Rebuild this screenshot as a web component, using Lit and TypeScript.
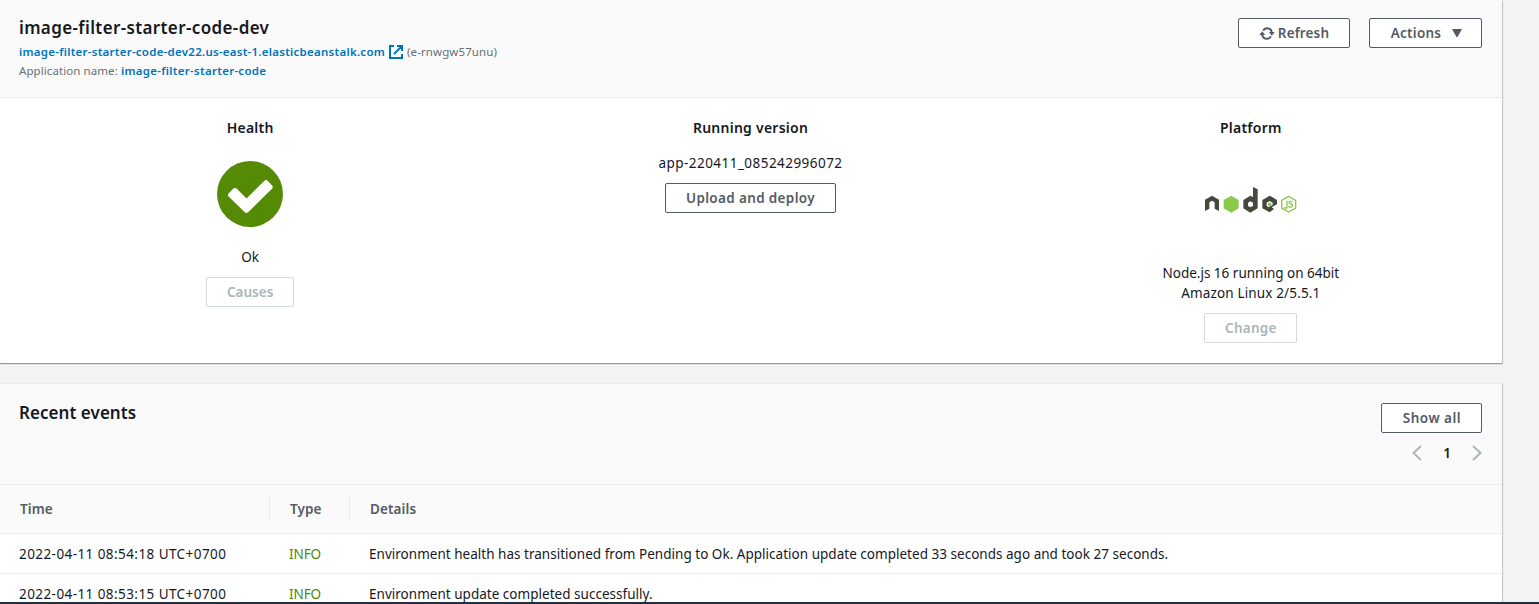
import { LitElement, html, css, svg } from "lit";
import { customElement } from "lit/decorators.js";

const EVENTS = [
  {
    time: "2022-04-11 08:54:18 UTC+0700",
    type: "INFO",
    details:
      "Environment health has transitioned from Pending to Ok. Application update completed 33 seconds ago and took 27 seconds.",
  },
  {
    time: "2022-04-11 08:53:15 UTC+0700",
    type: "INFO",
    details: "Environment update completed successfully.",
  },
];

const externalIcon = html`<svg class="ext" viewBox="0 0 14 14" width="14" height="14">
  ${svg`<path d="M5 1H1v12h12V9M8 1h5v5M12.6 1.4L5 9" fill="none" stroke="#0073bb" stroke-width="2"/>`}
</svg>`;

const refreshIcon = html`<svg class="refresh" viewBox="0 0 16 14" width="16" height="14">
  <g fill="none" stroke="#545b64" stroke-width="2">
    <path d="M4.200 4.600C5 3 6.400 2.200 8 2.200c2.400 0 4.300 1.600 4.700 4" />
    <path d="M11.800 10.400C11 12 9.600 12.800 8 12.800c-2.400 0-4.300-1.600-4.700-4" />
  </g>
  <path d="M9.800 6h6l-3 3.700zM0.200 9h6l-3-3.700z" fill="#545b64" />
</svg>`;

const okIcon = html`<svg class="ok" viewBox="0 0 66 66" width="66" height="66">
  <circle cx="33" cy="33" r="33" fill="#558b04" />
  <path
    d="M11.600 32.400L16.400 27.600Q18 26.300 19.600 27.600L29.500 37.400L47.400 19.700Q49 18.400 50.600 19.700L55.200 24.400Q56.300 26 55.200 27.600L31.200 51.300Q29.500 52.700 27.800 51.300L11.600 35.400Q10.300 33.900 11.600 32.400z"
    fill="#fff"
  />
</svg>`;

const nodeLogo = html`<svg class="logo" viewBox="42 33 279 84" width="93" height="28">
  <g fill="#46483e">
    <path d="M45 74L66 62L87 74V108L74 101V82L66 77L58 82V101L45 108z" />
    <path
      fill-rule="evenodd"
      d="M189 36L203 43V100L181 113L160 100V75L181 62L189 66zM181 79L174 83V93L181 97L189 93V83z"
    />
    <path
      fill-rule="evenodd"
      d="M239 62L261 75V88L245 97L252 102L239 112L217 100V75zM239 78L230 83V93L236 97L248 89V83z"
    />
  </g>
  <path d="M124 62L146 75V100L124 113L101 100V75z" fill="#8cc84b" />
  <path d="M239 82L244 85V91L239 94L234 91V85z" fill="#8cc84b" />
  <g fill="none" stroke="#8cc84b" stroke-width="4">
    <path d="M296 64L317 76V99L296 111L275 99V76z" />
    <path d="M291 77V96Q291 100 286 99L282 97M308 81Q298 77 297 82Q297 86 303 87Q309 89 307 94Q303 99 295 94" />
  </g>
</svg>`;

@customElement("app-root")
export class AppRoot extends LitElement {
  static styles = css`
    :host {
      display: block;
      height: 604px;
      overflow: hidden;
      background: #f2f3f3;
      font-family: "Noto Sans", "Open Sans", sans-serif;
      font-size: 13.5px;
      line-height: 20px;
      color: #16191f;
    }
    * {
      box-sizing: border-box;
    }
    .page {
      height: 604px;
      display: flex;
      flex-direction: column;
      gap: 20px;
      overflow: hidden;
      border-bottom: 2px solid #232f3e;
      white-space: nowrap;
    }
    .card {
      width: 1502px;
      flex: none;
      background: #fff;
      box-shadow: 0 1px 1px 0 rgba(0, 28, 36, 0.3), 1px 1px 1px 0 rgba(0, 28, 36, 0.15);
    }
    .head {
      display: flex;
      justify-content: space-between;
      background: #fafafa;
      border-bottom: 1px solid #eaeded;
    }
    .env {
      height: 98px;
      padding: 18px 20px 0 19px;
    }
    h1,
    h2,
    h3 {
      margin: 0;
      font-weight: 600;
    }
    h1 {
      font-size: 17px;
      line-height: 20px;
      letter-spacing: 0.37px;
    }
    .sub {
      display: flex;
      align-items: center;
      font-size: 11.5px;
      line-height: 19px;
      color: #687078;
    }
    .first {
      margin-top: 4px;
    }
    .link {
      color: #0073bb;
      font-weight: 600;
      letter-spacing: 0.25px;
    }
    .applink {
      letter-spacing: 0.28px;
    }
    .label {
      letter-spacing: 0.08px;
    }
    .ext {
      margin: 0 4px 0 4px;
    }
    .envid {
      letter-spacing: 0.1px;
    }
    .buttons {
      display: flex;
      gap: 19px;
    }
    .btn {
      display: inline-flex;
      align-items: center;
      justify-content: center;
      height: 30px;
      border: 1px solid #545b64;
      border-radius: 2px;
      background: #fff;
      color: #545b64;
      font: inherit;
      font-weight: 600;
      letter-spacing: 0.25px;
      padding: 0;
    }
    .disabled {
      border-color: #d5dbdb;
      color: #aab7b8;
    }
    .w-refresh {
      width: 112px;
      letter-spacing: 0.15px;
    }
    .w-actions {
      width: 113px;
      padding-left: 2px;
    }
    .w-causes {
      width: 88px;
      letter-spacing: 0;
    }
    .w-upload {
      width: 171px;
      letter-spacing: 0.35px;
    }
    .w-change {
      width: 93px;
    }
    .w-show {
      width: 101px;
      padding-left: 1px;
      letter-spacing: 0.5px;
    }
    .refresh {
      margin-right: 3px;
    }
    .caret {
      margin-left: 11px;
    }
    .overview {
      display: grid;
      grid-template-columns: repeat(3, 1fr);
      height: 265px;
      padding: 20px 1px 0 0;
    }
    .col {
      display: flex;
      flex-direction: column;
      align-items: center;
      text-align: center;
    }
    h3 {
      font-size: 14px;
      line-height: 20px;
      letter-spacing: 0.25px;
    }
    .ok {
      margin: 23px 0 20px;
    }
    .version {
      margin-top: 15px;
      letter-spacing: 0.46px;
    }
    .gap10 {
      margin-top: 10px;
    }
    .logo {
      margin: 48px 0 49px;
    }
    .release {
      letter-spacing: 0.15px;
    }
    .events {
      height: 260px;
      border-top: 1px solid #eaeded;
    }
    .ehead {
      height: 101px;
      padding: 19px 20px 0 19px;
    }
    h2 {
      font-size: 17px;
      line-height: 20px;
      letter-spacing: 0.05px;
    }
    .tools {
      display: flex;
      flex-direction: column;
      align-items: flex-end;
      gap: 10px;
    }
    .pager {
      display: flex;
      align-items: center;
      gap: 21px;
      font-weight: 600;
      height: 20px;
    }
    .current {
      width: 8px;
      text-align: center;
    }
    .row {
      display: grid;
      grid-template-columns: 270px 80px 1fr;
      align-items: center;
      height: 40px;
      border-bottom: 1px solid #eaeded;
    }
    .row > * {
      padding-left: 19px;
    }
    .thead {
      height: 49px;
      background: #fafafa;
      color: #545b64;
      font-weight: 600;
      letter-spacing: 0.1px;
    }
    .thead > * {
      padding: 2px 0 2px 20px;
      line-height: 22px;
    }
    .sep {
      border-right: 1px solid #eaeded;
    }
    .time {
      letter-spacing: 0.43px;
    }
    .info {
      color: #4d8a0b;
      letter-spacing: -0.1px;
    }
    .details {
      letter-spacing: 0.02px;
    }
  `;

  render() {
    return html`<div class="page">
      <section class="card">
        <header class="head env">
          <div>
            <h1>image-filter-starter-code-dev</h1>
            <div class="sub first">
              <span class="link">image-filter-starter-code-dev22.us-east-1.elasticbeanstalk.com</span>${externalIcon}<span class="envid">(e-rnwgw57unu)</span>
            </div>
            <div class="sub">
              <span class="label">Application name:&nbsp;</span><span class="link applink">image-filter-starter-code</span>
            </div>
          </div>
          <div class="buttons">
            <button class="btn w-refresh">${refreshIcon}<span>Refresh</span></button>
            <button class="btn w-actions">
              <span>Actions</span>
              <svg class="caret" viewBox="0 0 10 8" width="10" height="8"><path d="M0 0h10L5.500 8h-1z" fill="#545b64" /></svg>
            </button>
          </div>
        </header>
        <div class="overview">
          <div class="col">
            <h3>Health</h3>
            ${okIcon}
            <div>Ok</div>
            <button class="btn disabled gap10 w-causes">Causes</button>
          </div>
          <div class="col">
            <h3>Running version</h3>
            <div class="version">app-220411_085242996072</div>
            <button class="btn gap10 w-upload">Upload and deploy</button>
          </div>
          <div class="col">
            <h3>Platform</h3>
            ${nodeLogo}
            <div>Node.js 16 running on 64bit<br /><span class="release">Amazon Linux 2/5.5.1</span></div>
            <button class="btn disabled gap10 w-change">Change</button>
          </div>
        </div>
      </section>
      <section class="card events">
        <header class="head ehead">
          <h2>Recent events</h2>
          <div class="tools">
            <button class="btn w-show">Show all</button>
            <div class="pager">
              <svg viewBox="0 0 10 16" width="10" height="16"><path d="M9 1L1.500 8L9 15" fill="none" stroke="#aab7b8" stroke-width="2" /></svg>
              <span class="current">1</span>
              <svg viewBox="0 0 10 16" width="10" height="16"><path d="M1 1L8.500 8L1 15" fill="none" stroke="#aab7b8" stroke-width="2" /></svg>
            </div>
          </div>
        </header>
        <div class="row thead">
          <div class="sep">Time</div>
          <div class="sep">Type</div>
          <div>Details</div>
        </div>
        ${EVENTS.map(
          (e) => html`<div class="row">
            <div class="time">${e.time}</div>
            <div class="info">${e.type}</div>
            <div class="details">${e.details}</div>
          </div>`
        )}
      </section>
    </div>`;
  }
}
